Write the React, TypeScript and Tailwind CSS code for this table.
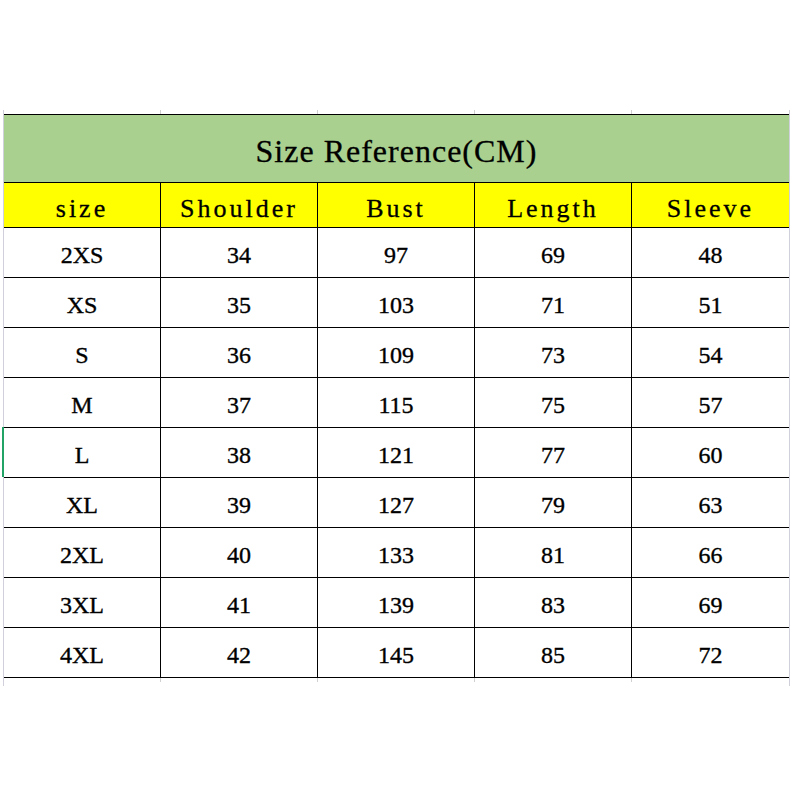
import React from "react";

const headers = ["size", "Shoulder", "Bust", "Length", "Sleeve"];
const rows: (string | number)[][] = [
  ["2XS", 34, 97, 69, 48],
  ["XS", 35, 103, 71, 51],
  ["S", 36, 109, 73, 54],
  ["M", 37, 115, 75, 57],
  ["L", 38, 121, 77, 60],
  ["XL", 39, 127, 79, 63],
  ["2XL", 40, 133, 81, 66],
  ["3XL", 41, 139, 83, 69],
  ["4XL", 42, 145, 85, 72],
];

function Stubs() {
  return (
    <div className="flex h-[4px]">
      {[0, 1, 2, 3, 4].map((i) => (
        <div
          key={i}
          className={`w-[157px] ${i < 4 ? "border-r border-[#d0d0d0]" : ""}`}
        />
      ))}
    </div>
  );
}

export default function App() {
  return (
    <div
      className="w-[792px] h-[792px] bg-white overflow-hidden"
      style={{ fontFamily: '"Liberation Serif", serif' }}
    >
      <div className="pt-[110px] pl-[3px]">
        <div className="relative w-[787px] border-l border-r border-[#cfd0dc] pb-[4px]">
          <Stubs />
          <div className="border-t border-black">
            <div className="h-[68px] border-b border-black bg-[#a9d08e] flex items-center justify-center pt-[4px] text-black text-[32px] tracking-[1px] [-webkit-text-stroke:0.3px_black]">
              Size Reference(CM)
            </div>
            <div className="flex h-[45px] border-b border-black bg-[#ffff00] text-black text-[26px] tracking-[3px] [-webkit-text-stroke:0.3px_black]">
              {headers.map((h, i) => (
                <div
                  key={h}
                  className={`w-[157px] flex items-center justify-center pt-[6px] ${
                    i < 4 ? "border-r border-black" : ""
                  }`}
                >
                  {h}
                </div>
              ))}
            </div>
            {rows.map((r, ri) => (
              <div
                key={ri}
                className="flex h-[50px] border-b border-black text-black text-[24px] [-webkit-text-stroke:0.35px_black]"
              >
                {r.map((c, i) => (
                  <div
                    key={i}
                    className={`w-[157px] flex items-center justify-center pt-[4px] ${
                      i < 4 ? "border-r border-black" : ""
                    }`}
                  >
                    {c}
                  </div>
                ))}
              </div>
            ))}
          </div>
          <Stubs />
          <div className="absolute left-[-2px] top-[317px] w-[2px] h-[50px] bg-[#21a366]" />
        </div>
      </div>
    </div>
  );
}
